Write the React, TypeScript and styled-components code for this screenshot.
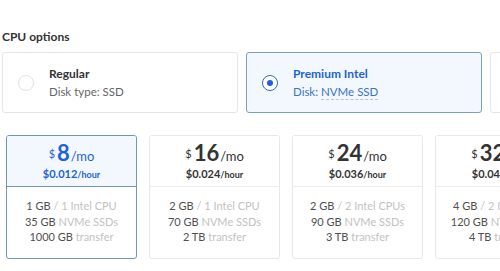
import styled, { createGlobalStyle } from "styled-components";

const GlobalStyle = createGlobalStyle`
  html, body {
    margin: 0;
    padding: 0;
    background: #fff;
    font-family: Lato, "Open Sans", sans-serif;
    overflow: hidden;
  }
`;

const cpuOptions = [
  { title: "Regular", label: "Disk type:", disk: "SSD", selected: false },
  { title: "Premium Intel", label: "Disk:", disk: "NVMe SSD", selected: true },
  { title: "Premium AMD", label: "Disk:", disk: "NVMe SSD", selected: false },
];

const plans = [
  { price: "8", hour: "$0.012", ram: "1 GB", cpu: "1 Intel CPU", disk: "35 GB", transfer: "1000 GB", selected: true },
  { price: "16", hour: "$0.024", ram: "2 GB", cpu: "1 Intel CPU", disk: "70 GB", transfer: "2 TB", selected: false },
  { price: "24", hour: "$0.036", ram: "2 GB", cpu: "2 Intel CPUs", disk: "90 GB", transfer: "3 TB", selected: false },
  { price: "32", hour: "$0.048", ram: "4 GB", cpu: "2 Intel CPUs", disk: "120 GB", transfer: "4 TB", selected: false },
];

export default function App() {
  return (
    <>
      <GlobalStyle />
      <Page>
        <Intro>and dev/test environment</Intro>
        <SectionTitle>CPU options</SectionTitle>
        <CpuRow>
          {cpuOptions.map((o) => (
            <CpuCard key={o.title} $selected={o.selected}>
              <Radio $selected={o.selected} />
              <CpuText>
                <CpuTitle $selected={o.selected}>{o.title}</CpuTitle>
                <CpuSub $selected={o.selected}>
                  {o.label} <DiskType $selected={o.selected}>{o.disk}</DiskType>
                </CpuSub>
              </CpuText>
            </CpuCard>
          ))}
        </CpuRow>
        <PlanRow>
          {plans.map((p) => (
            <PlanCard key={p.price} $selected={p.selected}>
              <PlanHead $selected={p.selected}>
                <Price>
                  <Dollar>$</Dollar>
                  <Amount>{p.price}</Amount>
                  <Per>/mo</Per>
                </Price>
                <Hourly>
                  {p.hour}
                  <HourUnit>/hour</HourUnit>
                </Hourly>
              </PlanHead>
              <Specs>
                <Spec>
                  <b>{p.ram}</b> / {p.cpu}
                </Spec>
                <Spec>
                  <b>{p.disk}</b> NVMe SSDs
                </Spec>
                <Spec>
                  <b>{p.transfer}</b> transfer
                </Spec>
              </Specs>
            </PlanCard>
          ))}
        </PlanRow>
      </Page>
    </>
  );
}

const Page = styled.div`
  width: 500px;
  height: 271px;
  overflow: hidden;
`;

const Intro = styled.div`
  margin-top: -11px;
  padding-left: 2px;
  font-size: 12px;
  line-height: 14px;
  color: #888;
`;

const SectionTitle = styled.div`
  margin-top: 27px;
  padding-left: 2px;
  font-size: 12px;
  font-weight: 700;
  color: #333;
  line-height: 14px;
`;

const CpuRow = styled.div`
  display: flex;
  gap: 8px;
  margin-top: 8px;
  padding-left: 2px;
  width: 720px;
`;

const CpuCard = styled.div<{ $selected: boolean }>`
  flex: 0 0 auto;
  width: 236px;
  height: 61px;
  box-sizing: border-box;
  display: flex;
  align-items: center;
  border: 1px solid ${(p) => (p.$selected ? "#7f9fb8" : "#e6e6e6")};
  background: ${(p) => (p.$selected ? "#f3f8fe" : "#fff")};
  border-radius: 3px;
`;

const Radio = styled.div<{ $selected: boolean }>`
  width: 16px;
  height: 16px;
  box-sizing: border-box;
  border-radius: 50%;
  margin-left: 15px;
  border: 1px solid ${(p) => (p.$selected ? "#2f69c8" : "#e2e2e2")};
  background: #fff;
  display: flex;
  align-items: center;
  justify-content: center;
  &::after {
    content: "";
    width: 6px;
    height: 6px;
    border-radius: 50%;
    background: #1f5fd6;
    display: ${(p) => (p.$selected ? "block" : "none")};
  }
`;

const CpuText = styled.div`
  margin-left: 15px;
  display: flex;
  flex-direction: column;
  gap: 4px;
`;

const CpuTitle = styled.div<{ $selected: boolean }>`
  font-size: 12px;
  font-weight: 700;
  line-height: 14px;
  color: ${(p) => (p.$selected ? "#1d63d6" : "#333")};
`;

const CpuSub = styled.div<{ $selected: boolean }>`
  font-size: 11.5px;
  line-height: 14px;
  color: ${(p) => (p.$selected ? "#3a73c9" : "#666")};
`;

const DiskType = styled.span<{ $selected: boolean }>`
  border-bottom: ${(p) => (p.$selected ? "1px dashed #b5c4d6" : "none")};
  padding-bottom: 1px;
`;

const PlanRow = styled.div`
  display: flex;
  gap: 12px;
  margin-top: 22px;
  padding-left: 6px;
  width: 700px;
`;

const PlanCard = styled.div<{ $selected: boolean }>`
  flex: 0 0 auto;
  width: 131px;
  height: 124px;
  box-sizing: border-box;
  border: 1px solid ${(p) => (p.$selected ? "#6d97b8" : "#e8e8e8")};
  border-radius: 3px;
  overflow: hidden;
  display: flex;
  flex-direction: column;
  --divider: ${(p) => (p.$selected ? "#6d97b8" : "#ececec")};
`;

const PlanHead = styled.div<{ $selected: boolean }>`
  height: 51px;
  box-sizing: border-box;
  border-bottom: 1px solid var(--divider);
  background: ${(p) => (p.$selected ? "#f3f8fe" : "#fff")};
  color: ${(p) => (p.$selected ? "#1d63d6" : "#333")};
  display: flex;
  flex-direction: column;
  align-items: center;
  padding-top: 6px;
`;

const Price = styled.div`
  display: flex;
  align-items: baseline;
  line-height: 22px;
`;

const Dollar = styled.span`
  font-size: 11px;
  align-self: flex-start;
  margin-top: 1px;
  margin-right: 2px;
`;

const Amount = styled.span`
  font-size: 22px;
  font-weight: 700;
`;

const Per = styled.span`
  font-size: 13px;
  margin-left: 1px;
`;

const Hourly = styled.div`
  font-size: 11px;
  font-weight: 700;
  line-height: 14px;
`;

const HourUnit = styled.span`
  font-size: 9px;
`;

const Specs = styled.div`
  padding-top: 11px;
  display: flex;
  flex-direction: column;
  align-items: center;
`;

const Spec = styled.div`
  font-size: 11px;
  line-height: 15.5px;
  color: #c2c2c2;
  b {
    color: #4f4f4f;
    font-weight: 400;
  }
`;
